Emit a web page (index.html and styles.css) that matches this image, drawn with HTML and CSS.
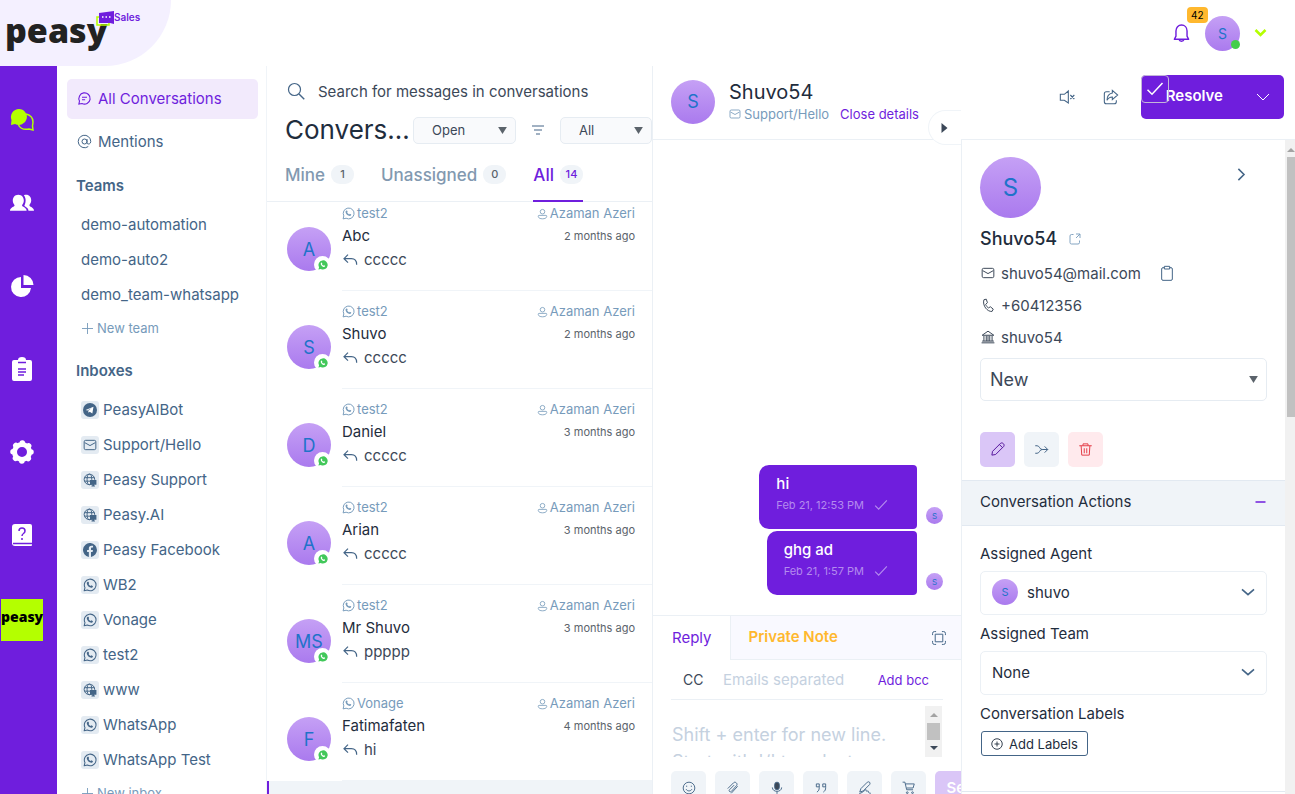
FILE: index.html
```html
<!DOCTYPE html>
<html lang="en">
<head>
    <meta charset="UTF-8">
    <meta name="viewport" content="width=device-width, initial-scale=1.0">
    <title>Peasy Sales</title>
    <link rel="stylesheet" href="styles.css">
</head>
<body>
    <!-- Shared icons -->
    <svg class="sprite" aria-hidden="true">
        <symbol id="whatsapp" viewBox="0 0 24 24"><path d="M2 22l1.400-5.500A10 10 0 1 1 7.500 20.700z" fill="none" stroke="currentColor" stroke-width="1.800" stroke-linejoin="round"/><path d="M8.200 6.600c.6-.5 1.100-.3 1.400.3l.7 1.600c.2.600-.1 1-.8 1.700.8 1.600 2 2.700 3.700 3.500.8-1 1.100-1.200 1.700-1l1.700.9c.5.300.5.800.3 1.300-.9 2.200-3.300 2-5.300 1-2.600-1.300-4.500-3.500-5-6.200-.3-1.200.4-2.400 1.600-3.100z" fill="currentColor"/></symbol>
        <symbol id="mail" viewBox="0 0 24 24"><g fill="none" stroke="currentColor" stroke-width="1.700"><rect x="2" y="4" width="20" height="16" rx="2.500"/><path d="M3 8l9 5 9-5"/></g></symbol>
        <symbol id="globe" viewBox="0 0 24 24"><g fill="none" stroke="currentColor" stroke-width="1.700"><circle cx="11" cy="11" r="9"/><ellipse cx="11" cy="11" rx="4" ry="9"/><path d="M2.500 8h17M2.500 14h10"/></g><path d="M12 12h11v8h-4v1.500h1.500V23h-6v-1.500H16V20h-4z" fill="currentColor"/></symbol>
        <symbol id="facebook" viewBox="0 0 24 24"><path d="M24 12A12 12 0 1 0 10 23.800v-8.400H7V12h3V9.400C10 6.400 11.800 4.700 14.500 4.700c1.300 0 2.700.2 2.700.2v3h-1.500c-1.500 0-2 .9-2 1.900V12H17l-.5 3.400h-2.800v8.400A12 12 0 0 0 24 12z" fill="currentColor"/></symbol>
        <symbol id="telegram" viewBox="0 0 24 24"><circle cx="12" cy="12" r="12" fill="currentColor"/><path d="M4.500 12L18 6.500 16 18l-4.500-3.200-2 2-.6-3.600L15 8.700 7.500 13z" fill="#fff"/></symbol>
        <symbol id="person" viewBox="0 0 24 24"><g fill="none" stroke="currentColor" stroke-width="1.800"><circle cx="12" cy="7" r="5"/><path d="M4.500 15h15c2 0 2 2 1.500 3.500-1 2.500-4 4-9 4s-8-1.500-9-4C2.500 17 2.500 15 4.500 15z"/></g></symbol>
        <symbol id="reply" viewBox="0 0 24 24"><path d="M9 4L3 10l6 6M3 10h11c5 0 8 3 8 9" fill="none" stroke="currentColor" stroke-width="1.800"/></symbol>
        <symbol id="waBadge" viewBox="0 0 24 24"><path d="M1 23l1.600-5.700A11 11 0 1 1 6.800 21.500z" fill="#42c85a"/><path d="M8 6.500c.7-.5 1.300-.2 1.600.4l.7 1.700c.2.6-.2 1.100-.8 1.700.8 1.700 2 2.700 3.700 3.500.8-1.100 1.100-1.300 1.700-1l1.800.9c.6.3.6.8.3 1.400-1 2.100-3.300 2-5.300 1-2.700-1.400-4.700-3.700-5.200-6.400-.2-1.400.4-2.600 1.500-3.200z" fill="#fff"/></symbol>
        <symbol id="chevron" viewBox="0 0 24 24"><path d="M3 8l9 8 9-8" fill="none" stroke="currentColor" stroke-width="2.500"/></symbol>
        <symbol id="caret" viewBox="0 0 10 8"><path d="M0 0h10L5 8z" fill="#5b636b"/></symbol>
        <symbol id="check" viewBox="0 0 24 24"><path d="M2 13l6 6L22 4" fill="none" stroke="currentColor" stroke-width="2"/></symbol>
        <symbol id="plus" viewBox="0 0 12 12"><path d="M6 0v12M0 6h12" stroke="currentColor" fill="none"/></symbol>
    </svg>

    <header class="topbar">
        <a class="logo" href="#">
            <span class="logo-name">peasy</span>
            <svg class="logo-bubble" viewBox="0 0 19 16"><path d="M4 6H1v8h12v-2" fill="none" stroke="#b4ff00" stroke-width="1.500"/><path d="M3 2l15-2v13l-4-1H3z" fill="#6f1edd"/><path d="M6 6h1.500M9.500 6H11M13 6h1.500" stroke="#fff" stroke-width="1.500"/></svg>
            <span class="logo-sub">Sales</span>
        </a>
        <div class="account">
            <button class="bell" aria-label="Notifications">
                <svg viewBox="0 0 24 24"><path d="M3 20h18l-2-4V9.500C19 5 16 2 12 2S5 5 5 9.500V16zM9 20.500c.5 2.500 5.500 2.500 6 0" fill="none" stroke="#6f1edd" stroke-width="1.800" stroke-linejoin="round"/></svg>
                <span class="count">42</span>
            </button>
            <button class="avatar me" aria-label="Profile">S<span class="online"></span></button>
            <svg class="lime-chevron" viewBox="0 0 12 8"><path d="M1 1l5 5 5-5" fill="none" stroke="#b4ff00" stroke-width="2.500"/></svg>
        </div>
    </header>

    <div class="app">
        <nav class="rail">
            <a href="#" aria-label="Conversations"><svg viewBox="0 0 24 24"><path d="M16 6c4 1 7 4 7 8 0 2-.5 3-.5 4l.5 4-4-1c-5 1-9-1-10.500-4" fill="none" stroke="#b4ff00" stroke-width="1.500"/><path d="M9 1a8 8 0 1 1-4 15l-4 1 .500-5A8 8 0 0 1 9 1z" fill="#b4ff00"/></svg></a>
            <a href="#" aria-label="Contacts"><svg viewBox="0 0 26 24"><path d="M9 3c4 0 6 3 6 6.500 0 2.500-1.500 4-2 5 0 2 5 2 5 6H0c0-4 5-4 5-6-.5-1-2-2.500-2-5C3 6 5 3 9 3zM15 3.500c5-1.500 8 1.500 8 6 0 2.500-2 4-2 5 0 2 5 2 5 6h-6c0-3-3-4-4.500-5.500C17 12 18 7 15 3.500z" fill="#fff"/></svg></a>
            <a href="#" aria-label="Reports"><svg viewBox="0 0 24 24"><path d="M11 3v11h10a10 10 0 1 1-10-11zM13.500 1A10 10 0 0 1 23.500 11h-10z" fill="#fff"/></svg></a>
            <a href="#" aria-label="Campaigns"><svg viewBox="0 0 24 24"><path d="M4 3h4a4 3 0 0 1 8 0h4q2 0 2 2v17q0 2-2 2H4q-2 0-2-2V5q0-2 2-2z" fill="#fff"/><path d="M8 5.500h8M8 12h8M8 15h8M8 18h6" stroke="#6f1edd" stroke-width="1.500"/></svg></a>
            <a href="#" aria-label="Settings"><svg viewBox="0 0 24 24"><g fill="none" stroke="#fff"><circle cx="12" cy="12" r="7.500" stroke-width="5"/><circle cx="12" cy="12" r="9" stroke-width="5.500" stroke-linecap="round" stroke-dasharray="0.100 6.968"/></g></svg></a>
            <a href="#" aria-label="Help"><svg viewBox="0 0 24 24"><path d="M5 1h15q2 0 2 2v19q0 1-1 1H5q-3 0-3-3V4q0-3 3-3z" fill="#fff"/><path d="M3 20.500h19M9 8q0-3 3-3t3 3q0 1.500-1.500 2.500T12 13M12 15v2" fill="none" stroke="#6f1edd" stroke-width="1.500"/></svg></a>
            <a class="brand" href="#">peasy</a>
        </nav>

        <aside class="sidebar">
            <a class="side-link active" href="#"><svg viewBox="0 0 24 24"><path d="M3 21l1-5a9 9 0 1 1 4 4zM8 10h8M8 14h5" fill="none" stroke="currentColor" stroke-width="1.800"/></svg>All Conversations</a>
            <a class="side-link" href="#"><svg viewBox="0 0 24 24"><path d="M16 12a4 4 0 1 1-8 0 4 4 0 0 1 8 0zM16 8v6c0 3 6 3 6-2a10 10 0 1 0-4 8" fill="none" stroke="currentColor" stroke-width="1.600"/></svg>Mentions</a>
            <h2>Teams</h2>
            <ul class="teams">
                <li><a href="#">demo-automation</a></li>
                <li><a href="#">demo-auto2</a></li>
                <li><a href="#">demo_team-whatsapp</a></li>
            </ul>
            <a class="new-link" href="#"><svg><use href="#plus"/></svg>New team</a>
            <h2>Inboxes</h2>
            <ul class="inboxes">
                <li><a href="#"><span><svg><use href="#telegram"/></svg></span>PeasyAIBot</a></li>
                <li><a href="#"><span><svg><use href="#mail"/></svg></span>Support/Hello</a></li>
                <li><a href="#"><span><svg><use href="#globe"/></svg></span>Peasy Support</a></li>
                <li><a href="#"><span><svg><use href="#globe"/></svg></span>Peasy.AI</a></li>
                <li><a href="#"><span><svg><use href="#facebook"/></svg></span>Peasy Facebook</a></li>
                <li><a href="#"><span><svg><use href="#whatsapp"/></svg></span>WB2</a></li>
                <li><a href="#"><span><svg><use href="#whatsapp"/></svg></span>Vonage</a></li>
                <li><a href="#"><span><svg><use href="#whatsapp"/></svg></span>test2</a></li>
                <li><a href="#"><span><svg><use href="#globe"/></svg></span>www</a></li>
                <li><a href="#"><span><svg><use href="#whatsapp"/></svg></span>WhatsApp</a></li>
                <li><a href="#"><span><svg><use href="#whatsapp"/></svg></span>WhatsApp Test</a></li>
            </ul>
            <a class="new-link" href="#"><svg><use href="#plus"/></svg>New inbox</a>
        </aside>

        <section class="list">
            <label class="search">
                <svg viewBox="0 0 24 24"><circle cx="10" cy="10" r="8" fill="none" stroke="currentColor" stroke-width="1.600"/><path d="M16 16l7 7" stroke="currentColor" stroke-width="1.800"/></svg>
                <input type="search" placeholder="Search for messages in conversations" aria-label="Search for messages in conversations">
            </label>
            <div class="filters">
                <h1>Conversations</h1>
                <div class="pick status"><select aria-label="Status"><option>Open</option><option>Resolved</option></select><svg><use href="#caret"/></svg></div>
                <button class="filter" aria-label="Filter"><svg viewBox="0 0 12 10"><path d="M0 1h12M2 5h8M4 9h4" stroke="currentColor"/></svg></button>
                <div class="pick kind"><select aria-label="Channel"><option>All</option></select><svg><use href="#caret"/></svg></div>
            </div>
            <div class="tabs">
                <button>Mine <span>1</span></button>
                <button>Unassigned <span>0</span></button>
                <button class="active">All <span>14</span></button>
            </div>
            <div class="conversations">
                <article class="conversation">
                    <div class="avatar">A<i><svg><use href="#waBadge"/></svg></i></div>
                    <div class="details">
                        <div class="meta"><span><svg><use href="#whatsapp"/></svg>test2</span><span><svg class="agent"><use href="#person"/></svg>Azaman Azeri</span></div>
                        <div class="who"><h3>Abc</h3><time>2 months ago</time></div>
                        <p><svg><use href="#reply"/></svg>ccccc</p>
                    </div>
                </article>
                <article class="conversation">
                    <div class="avatar">S<i><svg><use href="#waBadge"/></svg></i></div>
                    <div class="details">
                        <div class="meta"><span><svg><use href="#whatsapp"/></svg>test2</span><span><svg class="agent"><use href="#person"/></svg>Azaman Azeri</span></div>
                        <div class="who"><h3>Shuvo</h3><time>2 months ago</time></div>
                        <p><svg><use href="#reply"/></svg>ccccc</p>
                    </div>
                </article>
                <article class="conversation">
                    <div class="avatar">D<i><svg><use href="#waBadge"/></svg></i></div>
                    <div class="details">
                        <div class="meta"><span><svg><use href="#whatsapp"/></svg>test2</span><span><svg class="agent"><use href="#person"/></svg>Azaman Azeri</span></div>
                        <div class="who"><h3>Daniel</h3><time>3 months ago</time></div>
                        <p><svg><use href="#reply"/></svg>ccccc</p>
                    </div>
                </article>
                <article class="conversation">
                    <div class="avatar">A<i><svg><use href="#waBadge"/></svg></i></div>
                    <div class="details">
                        <div class="meta"><span><svg><use href="#whatsapp"/></svg>test2</span><span><svg class="agent"><use href="#person"/></svg>Azaman Azeri</span></div>
                        <div class="who"><h3>Arian</h3><time>3 months ago</time></div>
                        <p><svg><use href="#reply"/></svg>ccccc</p>
                    </div>
                </article>
                <article class="conversation">
                    <div class="avatar">MS<i><svg><use href="#waBadge"/></svg></i></div>
                    <div class="details">
                        <div class="meta"><span><svg><use href="#whatsapp"/></svg>test2</span><span><svg class="agent"><use href="#person"/></svg>Azaman Azeri</span></div>
                        <div class="who"><h3>Mr Shuvo</h3><time>3 months ago</time></div>
                        <p><svg><use href="#reply"/></svg>ppppp</p>
                    </div>
                </article>
                <article class="conversation">
                    <div class="avatar">F<i><svg><use href="#waBadge"/></svg></i></div>
                    <div class="details">
                        <div class="meta"><span><svg><use href="#whatsapp"/></svg>Vonage</span><span><svg class="agent"><use href="#person"/></svg>Azaman Azeri</span></div>
                        <div class="who"><h3>Fatimafaten</h3><time>4 months ago</time></div>
                        <p><svg><use href="#reply"/></svg>hi</p>
                    </div>
                </article>
                <article class="conversation selected"></article>
            </div>
        </section>

        <main class="workspace">
            <div class="chat-header">
                <div class="avatar">S</div>
                <div class="chat-title">
                    <h2>Shuvo54</h2>
                    <p><svg><use href="#mail"/></svg><span>Support/Hello</span><a href="#">Close details</a></p>
                </div>
                <div class="chat-actions">
                    <button class="icon-btn" aria-label="Mute"><svg viewBox="0 0 24 24"><path d="M14 3v18l-6-4H2V8h6zM17 9l6 6M23 9l-6 6" fill="none" stroke="currentColor" stroke-width="1.600"/></svg></button>
                    <button class="icon-btn" aria-label="Share"><svg viewBox="0 0 24 24"><path d="M10 4H5Q2 4 2 7v12q0 3 3 3h12q3 0 3-3v-2M14 2l8 7-8 7v-4c-4 0-6 1-8 5 0-7 3-10 8-11z" fill="none" stroke="currentColor" stroke-width="1.600"/></svg></button>
                    <div class="resolve">
                        <button class="resolve-main"><span class="tick"><svg><use href="#check"/></svg></span>Resolve</button>
                        <button class="resolve-more" aria-label="More actions"><svg viewBox="0 0 12 8"><path d="M0 1l6 6 6-6" fill="none" stroke="#fff"/></svg></button>
                    </div>
                </div>
            </div>
            <div class="columns">
                <section class="chat">
                    <button class="collapse" aria-label="Toggle details"><svg viewBox="0 0 6 10"><path d="M0 0l6 5-6 5z" fill="#3c4858"/></svg></button>
                    <div class="messages">
                        <div class="message">
                            <div class="bubble"><p>hi</p><div class="sent"><time>Feb 21, 12:53 PM</time><svg><use href="#check"/></svg></div></div>
                            <div class="avatar">S</div>
                        </div>
                        <div class="message">
                            <div class="bubble"><p>ghg ad</p><div class="sent"><time>Feb 21, 1:57 PM</time><svg><use href="#check"/></svg></div></div>
                            <div class="avatar">S</div>
                        </div>
                    </div>
                    <div class="composer">
                        <div class="modes">
                            <button class="mode active">Reply</button>
                            <div class="mode-rest">
                                <button class="mode note">Private Note</button>
                                <button class="expand" aria-label="Expand"><svg viewBox="0 0 24 24"><path d="M5.500 5.500h13v13h-13zM1 7V4q0-3 3-3h3M17 1h3q3 0 3 3v3M23 17v3q0 3-3 3h-3M7 23H4q-3 0-3-3v-3" fill="none" stroke="currentColor" stroke-width="1.700"/></svg></button>
                            </div>
                        </div>
                        <div class="cc-row">
                            <label for="cc">CC</label>
                            <input type="text" id="cc" placeholder="Emails separated">
                            <button>Add bcc</button>
                        </div>
                        <div class="editor">
                            <textarea aria-label="Message" placeholder="Shift + enter for new line. Start with '/' to select"></textarea>
                            <div class="mini-scroll"><svg viewBox="0 0 8 4"><path d="M0 4l4-4 4 4z" fill="#a3a3a3"/></svg><span></span><svg viewBox="0 0 8 4"><path d="M0 0h8L4 4z" fill="#3c4858"/></svg></div>
                        </div>
                        <div class="tools">
                            <button aria-label="Emoji"><svg viewBox="0 0 24 24"><circle cx="12" cy="12" r="10"/><path d="M7 14c2 4 8 4 10 0M8 8v2M16 8v2"/></svg></button>
                            <button aria-label="Attach"><svg viewBox="0 0 24 24"><path d="M3 13L13 3c3-3 8 2 5 5L9 18c-2 2-5-1-3-3l8-8M20 9l-11 12"/></svg></button>
                            <button aria-label="Record"><svg viewBox="0 0 24 24"><rect x="8" y="2" width="8" height="13" rx="4" fill="#3c4858"/><path d="M4 11c0 9 16 9 16 0M12 18v4"/></svg></button>
                            <button aria-label="Quote"><svg viewBox="0 0 24 24"><path d="M4 5h5v6c0 4-1 6-4 8M9 10H4V5M15 5h5v6c0 4-1 6-4 8M20 10h-5V5"/></svg></button>
                            <button aria-label="Signature"><svg viewBox="0 0 24 24"><path d="M3 19L5 13 16 2c3-2 6 1 4 4L9 17zM2 22c10-4 12-10 12-6s4-1 4 2 2 3 4 3"/></svg></button>
                            <button aria-label="Products"><svg viewBox="0 0 24 24"><path d="M1 2h4l3 13h11M6 5h15l-2 7H8"/><circle cx="9" cy="20" r="1.500"/><circle cx="18" cy="20" r="1.500"/></svg></button>
                            <button class="send">Send</button>
                        </div>
                    </div>
                </section>

                <aside class="contact">
                    <div class="profile">
                        <div class="profile-top">
                            <div class="avatar">S</div>
                            <button class="icon-btn" aria-label="Close"><svg viewBox="0 0 24 24"><path d="M7 3l9 9-9 9" fill="none" stroke="currentColor" stroke-width="2.500"/></svg></button>
                        </div>
                        <h2>Shuvo54 <a href="#" aria-label="Open contact"><svg viewBox="0 0 24 24"><path d="M9 3H5Q2 3 2 6v13q0 3 3 3h13q3 0 3-3v-4M14 2h8v8M22 2l-8 8" fill="none" stroke="currentColor" stroke-width="1.800"/></svg></a></h2>
                        <ul class="facts">
                            <li><svg><use href="#mail"/></svg>shuvo54@mail.com <button aria-label="Copy"><svg viewBox="0 0 24 24"><path d="M8 4H6Q4 4 4 6v15q0 2 2 2h12q2 0 2-2V6q0-2-2-2h-2M8 2h8v4H8z" fill="none" stroke="currentColor" stroke-width="1.500"/></svg></button></li>
                            <li><svg viewBox="0 0 24 24"><path d="M5 3l4-1 2 6-3 3c1 3 3 5 5 6l3-2 5 4-2 4C11 24 2 13 5 3z" fill="none" stroke="currentColor" stroke-width="1.700"/></svg>+60412356</li>
                            <li><svg viewBox="0 0 24 24"><path d="M2 9h20L12 2zM5 10v9M9 10v9M12 10v9M15 10v9M19 10v9M2 19h20M1 22h22" fill="none" stroke="currentColor" stroke-width="1.700"/></svg>shuvo54</li>
                        </ul>
                        <div class="pick stage"><select aria-label="Stage"><option>New</option></select><svg><use href="#caret"/></svg></div>
                        <div class="contact-actions">
                            <button class="edit" aria-label="Edit"><svg viewBox="0 0 24 24"><path d="M3 21l1-6L17 2c3-2 7 2 5 5L9 20zM15 4l5 5"/></svg></button>
                            <button aria-label="Merge"><svg viewBox="0 0 24 24"><path d="M2 6h3c4 0 4 6 8 6h9M2 18h3c4 0 4-6 8-6M17 7l5 5-5 5"/></svg></button>
                            <button class="delete" aria-label="Delete"><svg viewBox="0 0 24 24"><path d="M2 6h20M8 6V3h8v3M5 6l1 15h12l1-15M10 10v8M14 10v8"/></svg></button>
                        </div>
                    </div>
                    <button class="accordion">Conversation Actions<svg viewBox="0 0 10 2"><path d="M0 1h10" stroke="#6f1edd" stroke-width="1.500"/></svg></button>
                    <div class="fields">
                        <label for="agent">Assigned Agent</label>
                        <button class="dropdown" id="agent"><span class="avatar">S</span>shuvo<svg><use href="#chevron"/></svg></button>
                        <label for="team">Assigned Team</label>
                        <button class="dropdown" id="team">None<svg><use href="#chevron"/></svg></button>
                        <label for="labels">Conversation Labels</label>
                        <button class="add-labels" id="labels"><svg viewBox="0 0 24 24"><path d="M12 7v10M7 12h10" stroke="currentColor" stroke-width="1.800"/><circle cx="12" cy="12" r="10.500" fill="none" stroke="currentColor" stroke-width="1.800"/></svg>Add Labels</button>
                    </div>
                </aside>
                <div class="page-scroll"><svg viewBox="0 0 8 4"><path d="M0 4l4-4 4 4z" fill="#a3a3a3"/></svg><span></span></div>
            </div>
        </main>
    </div>
</body>
</html>
```

FILE: styles.css
```css
* {
    box-sizing: border-box;
}
body {
    display: flex;
    flex-direction: column;
    height: 100vh;
    margin: 0;
    overflow: hidden;
    font-family: Inter, "Liberation Sans", sans-serif;
    font-size: 15px;
    color: #1f2d3d;
    background: #fff;
}
h1, h2, h3, p, ul {
    margin: 0;
    padding: 0;
    font-weight: 400;
    list-style: none;
}
a {
    color: inherit;
    text-decoration: none;
}
button, input, select, textarea {
    margin: 0;
    padding: 0;
    border: 0;
    background: none;
    color: inherit;
    font: inherit;
}
svg {
    display: block;
    flex: none;
    width: 16px;
    height: 16px;
}
.sprite {
    position: absolute;
    width: 0;
    height: 0;
}
.avatar {
    display: flex;
    align-items: center;
    justify-content: center;
    flex: none;
    position: relative;
    width: 44px;
    height: 44px;
    border-radius: 50%;
    background: linear-gradient(#c5a0f5, #aa7aee);
    color: #1f73c9;
    font-size: 18px;
}

/* Top bar */
.topbar {
    display: flex;
    justify-content: space-between;
    flex: none;
    height: 66px;
}
.logo {
    display: flex;
    position: relative;
    width: 171px;
    padding: 8px 5px;
    border-bottom-right-radius: 66px;
    background: #f4f0ff;
}
.logo-name {
    font: 800 34px/44px "Open Sans", sans-serif;
    color: #222;
}
.logo-bubble {
    position: absolute;
    left: 96px;
    top: 11px;
    width: 19px;
    height: 16px;
}
.logo-sub {
    position: absolute;
    left: 114px;
    top: 11px;
    font-size: 10px;
    font-weight: 600;
    color: #6f1edd;
}
.account {
    display: flex;
    align-items: center;
    gap: 14px;
    padding-right: 28px;
}
.bell {
    position: relative;
}
.bell svg {
    width: 19px;
    height: 20px;
}
.count {
    position: absolute;
    left: 15px;
    top: -16px;
    padding: 0 4px;
    border-radius: 4px;
    background: #ffb82e;
    color: #000;
    font-size: 10px;
    line-height: 16px;
}
.me {
    width: 35px;
    height: 35px;
    font-size: 14px;
}
.online {
    position: absolute;
    right: 0;
    bottom: 2px;
    width: 9px;
    height: 9px;
    border-radius: 50%;
    background: #44ce4b;
}
.lime-chevron {
    width: 13px;
    height: 8px;
}

.app {
    display: flex;
    flex: 1;
    min-height: 0;
}
.rail {
    display: flex;
    flex-direction: column;
    flex: none;
    gap: 57px;
    width: 57px;
    padding: 41px 9px;
    background: #6f1edd;
}
.rail svg {
    width: 26px;
    height: 26px;
    padding: 1px;
}
.rail .brand {
    width: 42px;
    margin: -6px 0 0 -8px;
    background: #b4ff00;
    color: #000;
    font: 800 14px/36px "Open Sans", sans-serif;
    padding-bottom: 6px;
    text-align: center;
}

/* Sidebar */
.sidebar {
    flex: none;
    width: 210px;
    padding: 13px 8px 0 10px;
    border-right: 1px solid #f0f4f8;
    color: #446587;
    overflow: hidden;
}
.side-link {
    display: flex;
    align-items: center;
    gap: 6px;
    height: 40px;
    margin-bottom: 3px;
    padding: 0 10px 2px;
    border-radius: 5px;
}
.side-link svg {
    width: 15px;
    height: 15px;
}
.side-link.active {
    background: #f2eafc;
    color: #6f1edd;
}
.sidebar h2 {
    padding-left: 9px;
    font-size: 15px;
    line-height: 42px;
    font-weight: 600;
}
.teams, .inboxes {
    padding-left: 14px;
    line-height: 35px;
}
.inboxes a {
    display: flex;
    align-items: center;
    gap: 4px;
}
.inboxes span {
    display: flex;
    align-items: center;
    justify-content: center;
    width: 18px;
    height: 18px;
    border-radius: 3px;
    background: #e4ebf2;
}
.inboxes svg {
    width: 14px;
    height: 14px;
}
.new-link {
    display: flex;
    align-items: center;
    gap: 4px;
    height: 32px;
    margin-bottom: 6px;
    padding-left: 15px;
    font-size: 13px;
    color: #779bbb;
}
.new-link svg {
    width: 11px;
    height: 11px;
}

/* Conversation list */
.list {
    display: flex;
    flex-direction: column;
    flex: none;
    width: 386px;
    border-right: 1px solid #ebf0f5;
}
.search {
    display: flex;
    align-items: center;
    gap: 13px;
    padding: 15px 18px 0 20px;
    color: #446587;
}
.search svg {
    width: 18px;
    height: 18px;
}
.search input {
    flex: 1;
    height: 20px;
    outline: 0;
}
.search input::placeholder {
    color: #3c4858;
    opacity: 1;
}
.filters {
    display: flex;
    align-items: center;
    padding: 12px 0 0 18px;
}
.filters h1 {
    flex: 1;
    overflow: hidden;
    font-size: 26px;
    line-height: 34px;
    text-overflow: ellipsis;
    white-space: nowrap;
}
.pick {
    display: flex;
    align-items: center;
    position: relative;
}
.pick select {
    width: 100%;
    height: 27px;
    padding-left: 18px;
    appearance: none;
    border: 1px solid #e6ecf2;
    border-radius: 5px;
    background: #f9fafc;
    color: #3c4858;
    font-size: 13px;
}
.pick svg {
    position: absolute;
    right: 9px;
    width: 9px;
    height: 7px;
    pointer-events: none;
}
.status {
    width: 103px;
}
.kind {
    width: 92px;
}
.filter {
    padding: 0 16px;
    color: #446587;
}
.filter svg {
    width: 12px;
    height: 10px;
}
.tabs {
    display: flex;
    gap: 27px;
    padding: 9px 18px 0;
    border-bottom: 1px solid #ebf0f5;
}
.tabs button {
    display: flex;
    align-items: center;
    gap: 6px;
    height: 46px;
    padding-bottom: 7px;
    margin-bottom: -1px;
    border-bottom: 2px solid transparent;
    color: #8299b0;
    font-size: 17px;
    font-weight: 500;
}
.tabs span {
    min-width: 23px;
    border-radius: 9px;
    background: #f0f4f8;
    color: #5b636b;
    font-size: 11px;
    line-height: 19px;
    text-align: center;
}
.tabs .active {
    border-color: #6f1edd;
    color: #6f1edd;
}
.tabs .active span {
    color: #6f1edd;
}
.conversations {
    flex: 1;
    overflow: hidden;
}
/* the list is scrolled down a little */
.conversation:first-child {
    margin-top: -9px;
}
.conversation {
    display: flex;
    align-items: flex-start;
    gap: 11px;
    padding-left: 20px;
}
.conversation .avatar {
    margin-top: 34px;
    font-size: 18px;
}
.conversation i {
    display: flex;
    align-items: center;
    justify-content: center;
    position: absolute;
    right: 0;
    bottom: -2px;
    width: 17px;
    height: 17px;
    border-radius: 50%;
    background: #fff;
}
.conversation i svg {
    width: 10px;
    height: 10px;
}
.details {
    flex: 1;
    height: 98px;
    padding: 10px 17px 0 0;
    border-bottom: 1px solid #f0f4f8;
}
.meta, .who, .meta span {
    display: flex;
    align-items: center;
    justify-content: space-between;
}
.meta {
    color: #779bbb;
    font-size: 13px;
    line-height: 21px;
}
.meta span {
    gap: 2px;
}
.meta svg {
    width: 13px;
    height: 13px;
}
.meta .agent {
    width: 11px;
    height: 12px;
}
.who h3 {
    font-size: 15px;
    line-height: 24px;
}
.who time {
    color: #5b636b;
    font-size: 11px;
}
.details p {
    display: flex;
    align-items: center;
    gap: 6px;
    color: #3c4858;
    line-height: 24px;
}
.details p svg {
    color: #446587;
}
.selected {
    height: 30px;
    border-left: 2px solid #6f1edd;
    background: #f0f4f8;
}

/* Chat */
.workspace {
    display: flex;
    flex-direction: column;
    flex: 1;
    min-width: 0;
}
.chat-header {
    display: flex;
    align-items: center;
    height: 74px;
    gap: 14px;
    padding: 0 11px 2px 18px;
    border-bottom: 1px solid #ebf0f5;
}
.chat-title h2 {
    font-size: 20px;
    line-height: 24px;
}
.chat-title p {
    display: flex;
    align-items: center;
    gap: 3px;
    color: #779bbb;
    font-size: 13px;
    line-height: 20px;
}
.chat-title p svg {
    width: 12px;
    height: 12px;
}
.chat-title a {
    margin-left: 8px;
    color: #6f1edd;
}
.chat-actions {
    display: flex;
    align-items: center;
    gap: 28px;
    margin: -10px 0 0 auto;
}
.icon-btn {
    color: #446587;
}
.resolve {
    display: flex;
    margin-left: -6px;
    border-radius: 5px;
    background: #6f1edd;
    color: #fff;
    font-weight: 600;
}
.resolve-main {
    position: relative;
    height: 44px;
    padding: 0 19px 2px 25px;
}
.resolve-more {
    padding: 0 15px;
}
.resolve-more svg {
    width: 12px;
    height: 8px;
}
.tick {
    position: absolute;
    left: 0;
    top: 0;
    padding: 4px;
    border: 1px solid #c3b5d9;
    border-radius: 4px;
}
.tick svg {
    width: 18px;
    height: 18px;
}
.columns {
    display: flex;
    flex: 1;
    min-height: 0;
}
.chat {
    display: flex;
    flex-direction: column;
    flex: 1;
    position: relative;
    min-width: 0;
}
.collapse {
    position: absolute;
    right: 0;
    top: -30px;
    width: 33px;
    height: 35px;
    padding-left: 12px;
    border: 1px solid #f0f4f8;
    border-right: 0;
    border-radius: 18px 0 0 18px;
    background: #fff;
}
.collapse svg {
    width: 7px;
    height: 10px;
}
.messages {
    display: flex;
    flex-direction: column;
    justify-content: flex-end;
    flex: 1;
    gap: 2px;
    padding: 0 18px 20px;
}
.message {
    display: flex;
    align-items: flex-end;
    justify-content: flex-end;
    gap: 9px;
}
.bubble {
    padding: 9px 29px 13px 17px;
    border-radius: 10px 4px 4px 10px;
    background: #6f1edd;
    color: #fff;
    line-height: 20px;
}
.bubble p {
    font-weight: 500;
}
.sent {
    display: flex;
    align-items: center;
    gap: 10px;
    color: #b48bee;
    font-size: 11px;
    line-height: 22px;
}
.sent svg {
    width: 14px;
    height: 14px;
}
.message .avatar {
    width: 17px;
    height: 17px;
    margin-bottom: 5px;
    font-size: 8px;
}
.composer {
    border-top: 1px solid #ebf0f5;
}
.modes {
    display: flex;
    height: 44px;
}
.mode {
    padding: 0 18px 2px;
}
.mode.active {
    padding-left: 19px;
    color: #6f1edd;
}
.mode-rest {
    display: flex;
    justify-content: space-between;
    flex: 1;
    border: solid #ebf0f5;
    border-width: 0 0 1px 1px;
    background: #f9f9ff;
}
.note {
    color: #ffb82e;
    font-weight: 600;
}
.expand {
    padding-right: 15px;
    color: #446587;
}
.expand svg {
    width: 14px;
    height: 14px;
}
.cc-row {
    display: flex;
    align-items: center;
    height: 40px;
    margin: 0 18px;
    padding: 0 14px 0 12px;
    border-bottom: 1px solid #ebf0f5;
    font-size: 13px;
}
.cc-row label {
    width: 40px;
    color: #3c4858;
    font-size: 14px;
}
.cc-row input {
    flex: 1;
    min-width: 0;
    font-size: 15px;
}
.cc-row button {
    color: #6f1edd;
}
.cc-row input::placeholder,
.editor textarea::placeholder {
    color: #c5d1df;
    opacity: 1;
}
.editor {
    display: flex;
    height: 51px;
    margin: 6px 19px 0;
}
.editor textarea {
    flex: 1;
    min-width: 0;
    padding-top: 15px;
    overflow: hidden;
    font-size: 18px;
    line-height: 27px;
    resize: none;
}
.mini-scroll {
    display: flex;
    flex-direction: column;
    align-items: center;
    justify-content: space-between;
    width: 17px;
    padding: 7px 0;
    background: #f1f1f1;
}
.mini-scroll svg, .page-scroll svg {
    width: 8px;
    height: 4px;
}
.mini-scroll span {
    width: 13px;
    height: 17px;
    background: #c1c1c1;
}
.tools {
    display: flex;
    gap: 9px;
    height: 37px;
    padding: 14px 0 0 18px;
    overflow: hidden;
}
.tools button {
    display: flex;
    justify-content: center;
    flex: none;
    width: 35px;
    height: 35px;
    padding-top: 10px;
    border-radius: 5px;
    background: #f0f4f8;
    color: #446587;
}
.tools svg, .contact-actions svg {
    fill: none;
    stroke: currentColor;
    stroke-width: 1.6;
}
.tools svg {
    width: 14px;
    height: 14px;
}
.tools .send {
    width: 60px;
    padding-top: 7px;
    background: #dac6f7;
    color: #fff;
    font-weight: 600;
}

/* Contact details */
.contact {
    flex: none;
    width: 324px;
    border-left: 1px solid #ebf0f5;
    overflow: hidden;
}
.profile {
    padding: 17px 18px 13px;
}
.profile-top {
    display: flex;
    align-items: flex-start;
    justify-content: space-between;
    padding-right: 18px;
}
.profile-top .avatar {
    width: 61px;
    height: 61px;
    font-size: 24px;
}
.profile-top .icon-btn {
    padding-top: 10px;
}
.profile-top .icon-btn svg {
    width: 15px;
    height: 15px;
}
.profile h2 {
    display: flex;
    align-items: center;
    gap: 12px;
    font-size: 18px;
    font-weight: 500;
    line-height: 42px;
}
.profile h2 svg {
    width: 12px;
    height: 12px;
    color: #779bbb;
}
.facts {
    margin: -3px 0 5px;
    color: #3c4858;
}
.facts li {
    display: flex;
    align-items: center;
    gap: 6px;
    height: 32px;
    padding-left: 1px;
}
.facts svg {
    width: 14px;
    height: 14px;
}
.facts button {
    margin-left: 12px;
    color: #446587;
}
.facts button svg {
    width: 16px;
    height: 16px;
}
.stage select {
    height: 43px;
    padding-left: 9px;
    background: #fff;
    font-size: 18px;
}
.contact-actions {
    display: flex;
    gap: 9px;
    margin-top: 31px;
}
.contact-actions button {
    padding: 10px;
    border-radius: 5px;
    background: #f0f4f8;
    color: #446587;
}
.contact-actions svg {
    width: 15px;
    height: 15px;
}
.contact-actions .edit {
    background: #dac6f7;
    color: #58189f;
}
.contact-actions .delete {
    background: #ffeaed;
    color: #e5404b;
}
.accordion {
    display: flex;
    align-items: center;
    justify-content: space-between;
    width: 100%;
    height: 46px;
    padding: 0 19px 3px 18px;
    border: solid #e2e9f1;
    border-width: 1px 0;
    background: #f0f4f8;
}
.accordion svg {
    width: 11px;
    height: 2px;
}
.fields {
    padding: 15px 18px 35px;
    border-bottom: 1px solid #e2e9f1;
}
.fields label {
    display: block;
    padding-bottom: 4px;
    line-height: 26px;
}
.dropdown {
    display: flex;
    align-items: center;
    gap: 9px;
    width: 100%;
    height: 44px;
    margin-bottom: 6px;
    padding: 0 10px 2px 11px;
    border: 1px solid #ebf0f5;
    border-radius: 5px;
}
.dropdown .avatar {
    width: 26px;
    height: 26px;
    font-size: 11px;
}
.dropdown svg {
    margin-left: auto;
    color: #446587;
}
.add-labels {
    display: flex;
    align-items: center;
    gap: 6px;
    height: 25px;
    margin-left: 1px;
    padding: 0 9px;
    border: 1px solid #446587;
    border-radius: 3px;
    font-size: 13px;
}
.add-labels svg {
    width: 12px;
    height: 12px;
}
.page-scroll {
    display: flex;
    flex-direction: column;
    align-items: flex-end;
    flex: none;
    gap: 5px;
    width: 10px;
    padding-top: 8px;
    overflow: hidden;
    background: #f1f1f1;
}
.page-scroll span {
    width: 8px;
    height: 260px;
    background: #c1c1c1;
}
```
